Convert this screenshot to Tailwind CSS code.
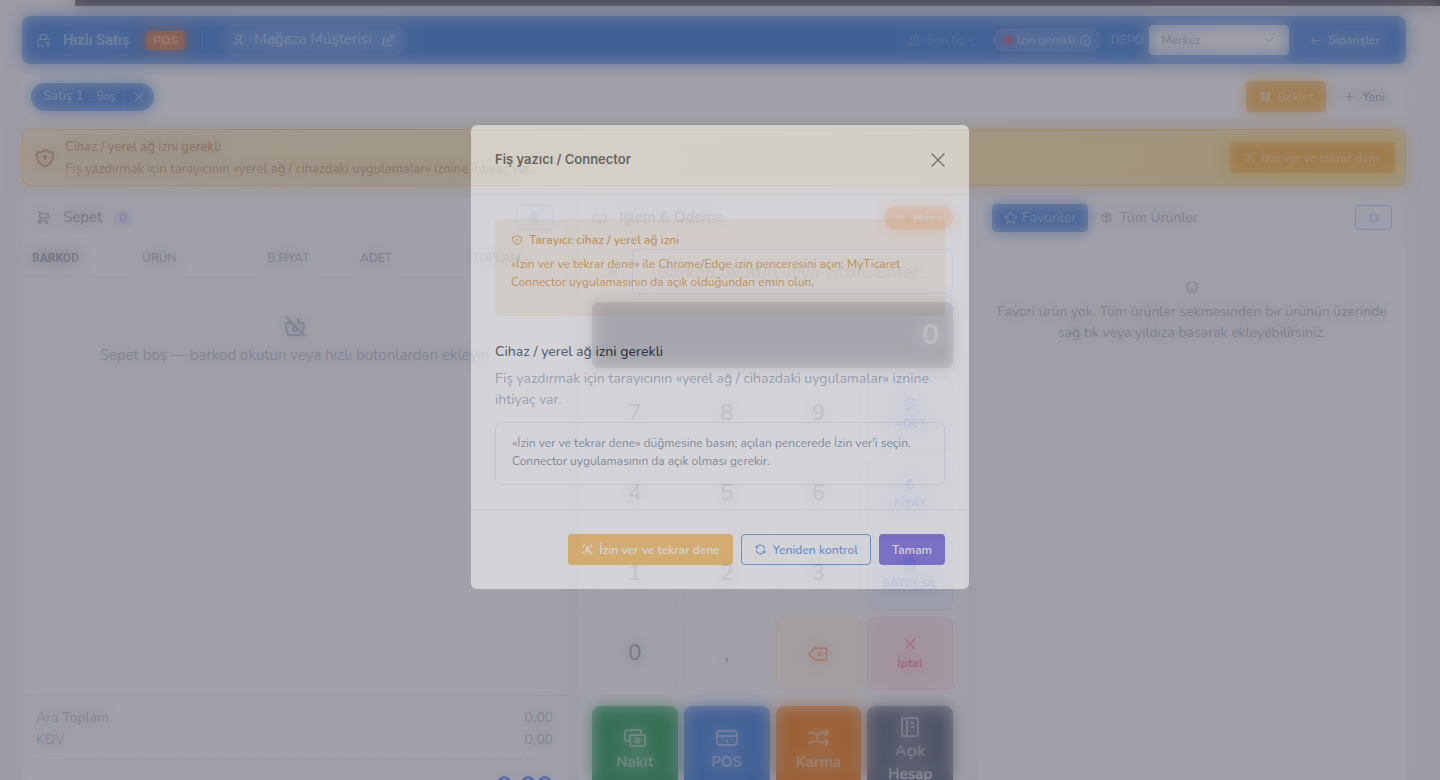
<!DOCTYPE html>
<html lang="tr">
	<head>
		<meta charset="UTF-8" />
		<meta name="viewport" content="width=device-width, initial-scale=1" />
		<title>Hızlı Satış</title>
		<script src="https://cdn.jsdelivr.net/npm/@tailwindcss/browser@4"></script>
	</head>
	<body class="relative h-screen overflow-hidden bg-[#f1f1f5] font-['Nunito','Noto_Sans',sans-serif] text-sm text-slate-700">
		<!-- icons -->
		<svg class="hidden" xmlns="http://www.w3.org/2000/svg">
			<symbol id="i-register" viewBox="0 0 24 24">
				<path d="M21 15h-2.5a1.5 1.5 0 0 0 0 3h1a1.5 1.5 0 0 1 0 3H17M19 21v1m0-8v1M13 21H5a2 2 0 0 1-2-2v-7a2 2 0 0 1 2-2h14a2 2 0 0 1 2 2v.5M7 10V5a3 3 0 0 1 3-3h4a3 3 0 0 1 3 3v5M7 14h.01M11 14h.01M15 14h.01M7 17h.01M11 17h.01" />
			</symbol>
			<symbol id="i-user" viewBox="0 0 24 24"><path d="M8 7a4 4 0 1 0 8 0a4 4 0 0 0-8 0M6 21v-2a4 4 0 0 1 4-4h4a4 4 0 0 1 4 4v2" /></symbol>
			<symbol id="i-edit" viewBox="0 0 24 24"><path d="M7 7H6a2 2 0 0 0-2 2v9a2 2 0 0 0 2 2h9a2 2 0 0 0 2-2v-1M20.4 6.6a2.1 2.1 0 0 0-3-3L9 12v3h3zM16 5l3 3" /></symbol>
			<symbol id="i-receipt" viewBox="0 0 24 24"><path d="M5 21V5a2 2 0 0 1 2-2h10a2 2 0 0 1 2 2v16l-3-2-2 2-2-2-2 2-2-2zM9 7h6M9 11h6M13 15h2" /></symbol>
			<symbol id="i-info" viewBox="0 0 24 24"><path d="M3 12a9 9 0 1 0 18 0a9 9 0 0 0-18 0M12 8h.01M11 12h1v4h1" /></symbol>
			<symbol id="i-back" viewBox="0 0 24 24"><path d="M5 12h14M5 12l6 6M5 12l6-6" /></symbol>
			<symbol id="i-down" viewBox="0 0 24 24"><path d="M4 8l8 8 8-8" /></symbol>
			<symbol id="i-x" viewBox="0 0 24 24"><path d="M19 5L5 19M5 5l14 14" /></symbol>
			<symbol id="i-plus" viewBox="0 0 24 24"><path d="M12 4v16M4 12h16" /></symbol>
			<symbol id="i-pause" viewBox="0 0 24 24"><path fill="currentColor" d="M4 4h6v16H4zM14 4h6v16h-6z" /></symbol>
			<symbol id="i-shield" viewBox="0 0 24 24"><path d="M12 3a12 12 0 0 0 8.500 3A12 12 0 0 1 12 21 12 12 0 0 1 3.500 6 12 12 0 0 0 12 3M11 11a1 1 0 1 0 2 0a1 1 0 0 0-2 0M12 12v2.500" /></symbol>
			<symbol id="i-scan" viewBox="0 0 24 24"><path d="M4 8V6a2 2 0 0 1 2-2h2M4 16v2a2 2 0 0 0 2 2h2M16 4h2a2 2 0 0 1 2 2v2M16 20h2a2 2 0 0 0 2-2v-2M8 16a4 4 0 0 1 8 0zM10 9a2 2 0 1 0 4 0a2 2 0 0 0-4 0" /></symbol>
			<symbol id="i-refresh" viewBox="0 0 24 24"><path d="M20 11A8.100 8.100 0 0 0 4.500 9M4 5v4h4M4 13a8.100 8.100 0 0 0 15.500 2m.5 4v-4h-4" /></symbol>
			<symbol id="i-cart" viewBox="0 0 24 24"><path d="M4 19a2 2 0 1 0 4 0a2 2 0 1 0-4 0M15 19a2 2 0 1 0 4 0a2 2 0 1 0-4 0M17 17H6V3H4M6 5l14 1-1 7H6" /></symbol>
			<symbol id="i-trash" viewBox="0 0 24 24"><path d="M4 7h16M10 11v6M14 11v6M5 7l1 12a2 2 0 0 0 2 2h8a2 2 0 0 0 2-2l1-12M9 7V4a1 1 0 0 1 1-1h4a1 1 0 0 1 1 1v3" /></symbol>
			<symbol id="i-trash-x" viewBox="0 0 24 24"><path d="M4 7h16M5 7l1 12a2 2 0 0 0 2 2h8a2 2 0 0 0 2-2l1-12M9 7V4a1 1 0 0 1 1-1h4a1 1 0 0 1 1 1v3M10 12l4 4m0-4l-4 4" /></symbol>
			<symbol id="i-basket-off" viewBox="0 0 24 24"><path d="M2 2l20 20M17 10l-2-6M7 10l1-2M9 4v.01M15 9h4a2 2 0 0 1 2 2.300l-1 5.700M18.500 20.500a3 3 0 0 1-1 .5H7.200a3 3 0 0 1-3-2.500L3 11.300A2 2 0 0 1 5 9h3M12 13a2 2 0 1 0 2 2.500" /></symbol>
			<symbol id="i-keyboard" viewBox="0 0 24 24"><path d="M2 8a2 2 0 0 1 2-2h16a2 2 0 0 1 2 2v8a2 2 0 0 1-2 2H4a2 2 0 0 1-2-2zM6 10h.01M10 10h.01M14 10h.01M18 10h.01M6 14h.01M18 14h.01M10 14h4" /></symbol>
			<symbol id="i-stack" viewBox="0 0 24 24"><path d="M12 3L4 7l8 4 8-4zM4 12l8 4 8-4M4 17l8 4 8-4" /></symbol>
			<symbol id="i-barcode" viewBox="0 0 24 24"><path d="M4 7V6a2 2 0 0 1 2-2h2M4 17v1a2 2 0 0 0 2 2h2M16 4h2a2 2 0 0 1 2 2v1M16 20h2a2 2 0 0 0 2-2v-1M5 11h14M8 13v3M12 13v3M16 13v3" /></symbol>
			<symbol id="i-lira" viewBox="0 0 24 24"><path d="M10 4v15c6 0 8-3 8-7M6 14l9-5M6 10l9-5" /></symbol>
			<symbol id="i-backspace" viewBox="0 0 24 24"><path d="M21 5a1 1 0 0 1 1 1v12a1 1 0 0 1-1 1H8l-6-6a1.500 1.500 0 0 1 0-2l6-6zM12 10l4 4m0-4l-4 4" /></symbol>
			<symbol id="i-cash" viewBox="0 0 24 24"><path d="M6 15H4a2 2 0 0 1-2-2V6a2 2 0 0 1 2-2h12a2 2 0 0 1 2 2v2M7 10a1 1 0 0 1 1-1h13a1 1 0 0 1 1 1v9a1 1 0 0 1-1 1H8a1 1 0 0 1-1-1zM12.500 14.500a2 2 0 1 0 4 0a2 2 0 0 0-4 0" /></symbol>
			<symbol id="i-card" viewBox="0 0 24 24"><path d="M2 8a3 3 0 0 1 3-3h14a3 3 0 0 1 3 3v8a3 3 0 0 1-3 3H5a3 3 0 0 1-3-3zM2 10h20M7 15h.01M11 15h2" /></symbol>
			<symbol id="i-shuffle" viewBox="0 0 24 24"><path d="M19 3l3 3.500-3 3.500M19 20l3-3.500-3-3.500M2 6.500h4a5 5 0 0 1 5 5 5 5 0 0 0 5 5h6M22 6.500h-6a5 5 0 0 0-4.500 3M9 14.500a5 5 0 0 1-3 2H2" /></symbol>
			<symbol id="i-book" viewBox="0 0 24 24"><path d="M5 3h13a2 2 0 0 1 2 2v14a2 2 0 0 1-2 2H5a1 1 0 0 1-1-1V4a1 1 0 0 1 1-1M9 3v20M13 8h3M13 12h3" /></symbol>
			<symbol id="i-star" viewBox="0 0 24 24"><path d="M12 17.800l-6.200 3.200 1.200-6.900-5-4.800 6.900-1L12 2l3.100 6.300 6.900 1-5 4.800 1.200 6.900z" /></symbol>
			<symbol id="i-box" viewBox="0 0 24 24"><path d="M12 3l8 4.500v9L12 21l-8-4.500v-9zM12 12l8-4.500M12 12v9M12 12L4 7.500M16 5.300l-8 4.400" /></symbol>
			<symbol id="i-meh" viewBox="0 0 24 24"><path d="M3 12a9 9 0 1 0 18 0a9 9 0 0 0-18 0M9 10h.01M15 10h.01M9 15h6" /></symbol>
		</svg>

		<div class="absolute top-0 right-0 left-[75px] h-[6px] bg-[#34343c]"></div>

		<div class="flex flex-col gap-[11px] pt-4 pr-[34px] pl-[22px] [&_svg]:fill-none [&_svg]:stroke-current [&_svg]:stroke-2">
			<header class="flex h-12 items-center rounded-lg bg-[#2a70d2] px-[14px] text-white">
				<svg class="size-[15px]"><use href="#i-register" /></svg>
				<h1 class="ml-3 font-['Inter'] text-sm font-semibold">Hızlı Satış</h1>
				<span class="ml-4 rounded bg-orange-500 px-2 text-xs leading-[19px] font-bold">POS</span>
				<span class="ml-4 h-5 w-px bg-white/30"></span>
				<button class="ml-4 flex h-8 items-center rounded-full bg-white/15 px-3 text-[15px]">
					<svg class="mr-2 size-[15px]"><use href="#i-user" /></svg>
					Mağaza Müşterisi
					<svg class="ml-[10px] size-[15px]"><use href="#i-edit" /></svg>
				</button>
				<button class="ml-auto flex items-center text-xs font-medium text-white/45">
					<svg class="mr-[6px] size-[13px]"><use href="#i-receipt" /></svg>Son fiş
					<span class="ml-1 border-x-[3px] border-t-[3px] border-x-transparent border-t-current"></span>
				</button>
				<button class="ml-5 flex h-[22px] items-center rounded-full border border-white/30 bg-white/15 px-2 text-xs">
					<span class="mr-1 size-[10px] rounded-full bg-red-500"></span>İzin gerekli
					<svg class="ml-1 size-[13px]"><use href="#i-info" /></svg>
				</button>
				<label for="depo" class="ml-[10px] text-xs text-white/80">DEPO</label>
				<div class="relative ml-[6px] w-[140px]">
					<select id="depo" class="h-[30px] w-full appearance-none rounded bg-white px-3 text-xs font-medium text-slate-600">
						<option>Merkez</option>
					</select>
					<svg class="pointer-events-none absolute top-[9px] right-[14px] size-3 text-slate-700"><use href="#i-down" /></svg>
				</div>
				<button class="ml-2 flex h-7 items-center rounded bg-white/10 px-3 text-xs font-semibold">
					<svg class="mr-[6px] size-[13px]"><use href="#i-back" /></svg>Siparişler
				</button>
			</header>

			<div class="flex h-[43px] items-center rounded-lg bg-white pr-2 pl-[9px]">
				<div class="flex h-7 items-center rounded-full bg-[#2a70d2] pr-2 pl-3 text-white">
					<button class="flex items-center gap-[5px] text-[13px] font-semibold">Satış 1 <span class="font-normal opacity-60">·</span> <span class="text-[11px] font-medium">Boş</span></button>
					<button aria-label="Kapat" class="ml-2 flex h-[26px] items-center border-l border-white/20 pl-2">
						<svg class="size-[14px]"><use href="#i-x" /></svg>
					</button>
				</div>
				<button class="ml-auto flex h-[31px] items-center rounded bg-[#f5a524] px-[13px] text-xs font-semibold text-white">
					<svg class="mr-[6px] size-[13px]"><use href="#i-pause" /></svg>Beklet
				</button>
				<button class="ml-1 flex h-[31px] items-center rounded bg-slate-100 px-[13px] text-xs font-semibold text-slate-700">
					<svg class="mr-[6px] size-[13px]"><use href="#i-plus" /></svg>Yeni
				</button>
			</div>

			<div role="alert" class="flex h-[57px] items-center rounded-lg border border-amber-500 bg-linear-to-r from-[#fef0c7] to-[#fde28a] pr-[10px] pl-[11px] text-amber-900">
				<svg class="size-[22px]"><use href="#i-shield" /></svg>
				<div class="ml-[9px]">
					<p class="text-[13px] leading-[22px] font-medium">Cihaz / yerel ağ izni gerekli</p>
					<p class="text-[13px] leading-[22px]">Fiş yazdırmak için tarayıcının «yerel ağ / cihazdaki uygulamalar» iznine ihtiyaç var.</p>
				</div>
				<button class="ml-auto flex h-[31px] items-center rounded bg-[#f5a524] px-[13px] text-xs font-semibold text-white">
					<svg class="mr-[6px] size-[13px]"><use href="#i-scan" /></svg>İzin ver ve tekrar dene
				</button>
			</div>

			<main class="grid grid-cols-[545fr_389fr_428fr] gap-[11px]">
				<section class="flex flex-col rounded-lg bg-white">
					<div class="flex h-[42px] items-center border-b border-slate-200 px-[14px]">
						<svg class="size-[15px]"><use href="#i-cart" /></svg>
						<h2 class="ml-3 text-[15px] font-medium">Sepet</h2>
						<span class="ml-3 rounded bg-indigo-100 px-[5px] text-xs font-semibold text-indigo-600">0</span>
						<button aria-label="Sepeti temizle" class="ml-auto flex h-[25px] w-[37px] items-center justify-center rounded border border-blue-500 text-blue-500">
							<svg class="size-[13px]"><use href="#i-trash" /></svg>
						</button>
					</div>
					<table class="w-full table-fixed border-b-2 border-slate-200 text-left text-xs text-slate-600">
						<thead>
							<tr class="h-[38px] [&>th]:font-medium">
								<th class="w-[20%] pl-[10px] font-['Roboto'] text-slate-700"><b>BARKOD</b></th>
								<th class="w-[23%] pl-[11px]">ÜRÜN</th>
								<th class="w-[17%] pl-[11px]">B.FİYAT</th>
								<th class="w-[20%] pl-[11px]">ADET</th>
								<th class="pl-[14px]">TOPLAM</th>
							</tr>
						</thead>
					</table>
					<div class="flex flex-1 flex-col items-center pt-9 text-slate-500">
						<svg class="size-6"><use href="#i-basket-off" /></svg>
						<p class="mt-[6px] text-[15px] leading-[22px]">Sepet boş — barkod okutun veya hızlı butonlardan ekleyin</p>
					</div>
					<div class="h-[127px] border-t border-slate-300 px-[14px] pt-[11px] text-sm leading-[22px] text-slate-500">
						<div class="flex justify-between"><span>Ara Toplam</span><span>0,00</span></div>
						<div class="flex justify-between"><span>KDV</span><span>0,00</span></div>
						<div class="mt-2 flex justify-end border-t border-dashed border-slate-300 pt-4 text-[28px] font-bold text-blue-600">0,00</div>
					</div>
				</section>

				<section class="flex flex-col rounded-lg bg-white">
					<div class="flex h-[42px] items-center px-[14px]">
						<svg class="size-[15px]"><use href="#i-keyboard" /></svg>
						<h2 class="ml-3 text-[15px] font-medium">İşlem &amp; Ödeme</h2>
						<span class="ml-auto flex h-6 items-center rounded-full bg-orange-500 px-[10px] text-xs font-extrabold text-white">
							<svg class="mr-[6px] size-[13px]"><use href="#i-stack" /></svg>Hazır
						</span>
					</div>
					<div class="mx-[14px] mt-[10px] flex h-[45px]">
						<label for="barkod" class="flex w-10 items-center justify-center text-slate-500"><svg class="size-[14px]"><use href="#i-barcode" /></svg></label>
						<input id="barkod" class="min-w-0 flex-1 rounded-r-lg border border-blue-500 px-6 text-lg font-semibold placeholder:text-slate-400" placeholder="Barkod okutun veya yazın, Enter…" />
					</div>
					<output class="mx-[14px] mt-2 block h-[66px] rounded-md bg-[#222c38] px-[14px] text-right text-[28px] leading-[66px] font-bold text-white">0</output>
					<div class="mx-[14px] mt-[9px] grid auto-rows-[73px] grid-cols-4 gap-x-[6px] gap-y-[7px] text-[22px] font-medium text-slate-800 [&>button]:flex [&>button]:flex-col [&>button]:items-center [&>button]:justify-center [&>button]:rounded-lg [&>button]:border">
						<button class="border-slate-200">7</button>
						<button class="border-slate-200">8</button>
						<button class="border-slate-200">9</button>
						<button class="border-blue-200 bg-blue-50 text-xs font-bold text-blue-600"><svg class="mb-[3px] size-4"><use href="#i-stack" /></svg>ADET</button>
						<button class="border-slate-200">4</button>
						<button class="border-slate-200">5</button>
						<button class="border-slate-200">6</button>
						<button class="border-blue-200 bg-blue-50 text-xs font-bold text-blue-600"><svg class="mb-[3px] size-4"><use href="#i-lira" /></svg>FİYAT</button>
						<button class="border-slate-200">1</button>
						<button class="border-slate-200">2</button>
						<button class="border-slate-200">3</button>
						<button class="border-blue-200 bg-blue-50 text-xs font-bold text-blue-600"><svg class="mb-[3px] size-4"><use href="#i-trash-x" /></svg>SATIR SİL</button>
						<button class="border-slate-200">0</button>
						<button class="border-slate-200">,</button>
						<button aria-label="Sil" class="border-amber-200 bg-[#fff8eb] text-orange-600"><svg class="size-5"><use href="#i-backspace" /></svg></button>
						<button class="border-rose-300 bg-[#ffe8eb] text-xs font-bold text-rose-600"><svg class="mb-[3px] size-4"><use href="#i-x" /></svg>İptal</button>
					</div>
					<div class="mx-[14px] mt-4 mb-3 grid h-[104px] grid-cols-4 gap-[6px] text-[15px] leading-[23px] font-bold text-white [&>button]:flex [&>button]:flex-col [&>button]:items-center [&>button]:rounded-lg">
						<button class="bg-[#0f9145] pt-5"><svg class="mb-px size-6"><use href="#i-cash" /></svg>Nakit <span class="text-[10px]">F8</span></button>
						<button class="bg-[#2a70d2] pt-5"><svg class="mb-px size-6"><use href="#i-card" /></svg>POS <span class="text-[10px]">F9</span></button>
						<button class="bg-[#f07000] pt-5"><svg class="mb-px size-6"><use href="#i-shuffle" /></svg>Karma <span class="text-[10px]">F10</span></button>
						<button class="bg-[#4b586b] pt-[9px]"><svg class="mb-px size-6"><use href="#i-book" /></svg>Açık<br />Hesap</button>
					</div>
				</section>

				<section class="flex flex-col rounded-lg bg-white">
					<div class="flex h-[42px] items-center border-b border-slate-200 px-[14px] text-sm">
						<button class="flex h-7 items-center rounded bg-[#2a70d2] px-3 text-white"><svg class="mr-1 size-[14px]"><use href="#i-star" /></svg>Favoriler</button>
						<button class="ml-3 flex items-center text-slate-600"><svg class="mr-[6px] size-[13px]"><use href="#i-box" /></svg>Tüm Ürünler</button>
						<button aria-label="Yenile" class="ml-auto flex h-[25px] w-[37px] items-center justify-center rounded border border-blue-500 text-blue-500"><svg class="size-3"><use href="#i-refresh" /></svg></button>
					</div>
					<div class="flex flex-col items-center px-4 pt-10 text-center text-sm leading-[21px] text-slate-600">
						<svg class="mt-px mb-[7px] size-[14px]"><use href="#i-meh" /></svg>
						<p>Favori ürün yok. Tüm ürünler sekmesinden bir ürünün üzerinde<br />sağ tık veya yıldıza basarak ekleyebilirsiniz.</p>
					</div>
				</section>
			</main>
		</div>

		<div class="fixed inset-0 bg-[#565465]/81 opacity-68 backdrop-blur-sm"></div>

		<div class="fixed inset-0 flex items-start justify-center pt-[125px] opacity-54 [&_svg]:fill-none [&_svg]:stroke-current [&_svg]:stroke-2">
			<div role="dialog" aria-labelledby="dialogTitle" class="w-[498px] rounded-md bg-white">
				<div class="flex h-[70px] items-center justify-between border-b border-[#ededf0] px-6">
					<h2 id="dialogTitle" class="font-['Inter'] text-[13px] font-semibold text-[#3a3a40]">Fiş yazıcı / Connector</h2>
					<button aria-label="Kapat" class="-mr-1 text-slate-600"><svg class="size-[22px] !stroke-[1.5]"><use href="#i-x" /></svg></button>
				</div>
				<div class="p-6">
					<div class="h-[97px] rounded bg-[#fbf1e4] px-4 pt-3 text-xs leading-[18px] text-[#d48a20]">
						<p class="flex items-center font-semibold"><svg class="mr-[6px] size-3"><use href="#i-shield" /></svg>Tarayıcı: cihaz / yerel ağ izni</p>
						<p class="mt-[6px]">«İzin ver ve tekrar dene» ile Chrome/Edge izin penceresini açın; MyTicaret Connector uygulamasının da açık olduğundan emin olun.</p>
					</div>
					<h3 class="mt-6 text-sm leading-6 font-medium text-slate-800">Cihaz / yerel ağ izni gerekli</h3>
					<p class="mt-1 text-sm leading-[21px] text-slate-400">Fiş yazdırmak için tarayıcının «yerel ağ / cihazdaki uygulamalar» iznine ihtiyaç var.</p>
					<div class="mt-3 h-[63px] rounded-md border border-[#e6e6eb] px-4 pt-[11px] text-xs leading-[18px] text-slate-500">
						«İzin ver ve tekrar dene» düğmesine basın; açılan pencerede İzin ver'i seçin. Connector uygulamasının da açık olması gerekir.
					</div>
				</div>
				<div class="flex justify-end gap-2 border-t border-[#e8e8ec] px-6 pt-6 pb-6 text-xs font-semibold">
					<button class="flex h-[31px] items-center rounded bg-[#fcb540] px-[13px] text-white"><svg class="mr-[6px] size-[13px]"><use href="#i-scan" /></svg>İzin ver ve tekrar dene</button>
					<button class="flex h-[31px] items-center rounded border border-[#3f80e0] px-3 text-[#3f80e0]"><svg class="mr-[6px] size-[13px]"><use href="#i-refresh" /></svg>Yeniden kontrol</button>
					<button class="h-[31px] rounded bg-[#5f4bdb] px-[13px] text-white">Tamam</button>
				</div>
			</div>
		</div>
	</body>
</html>
